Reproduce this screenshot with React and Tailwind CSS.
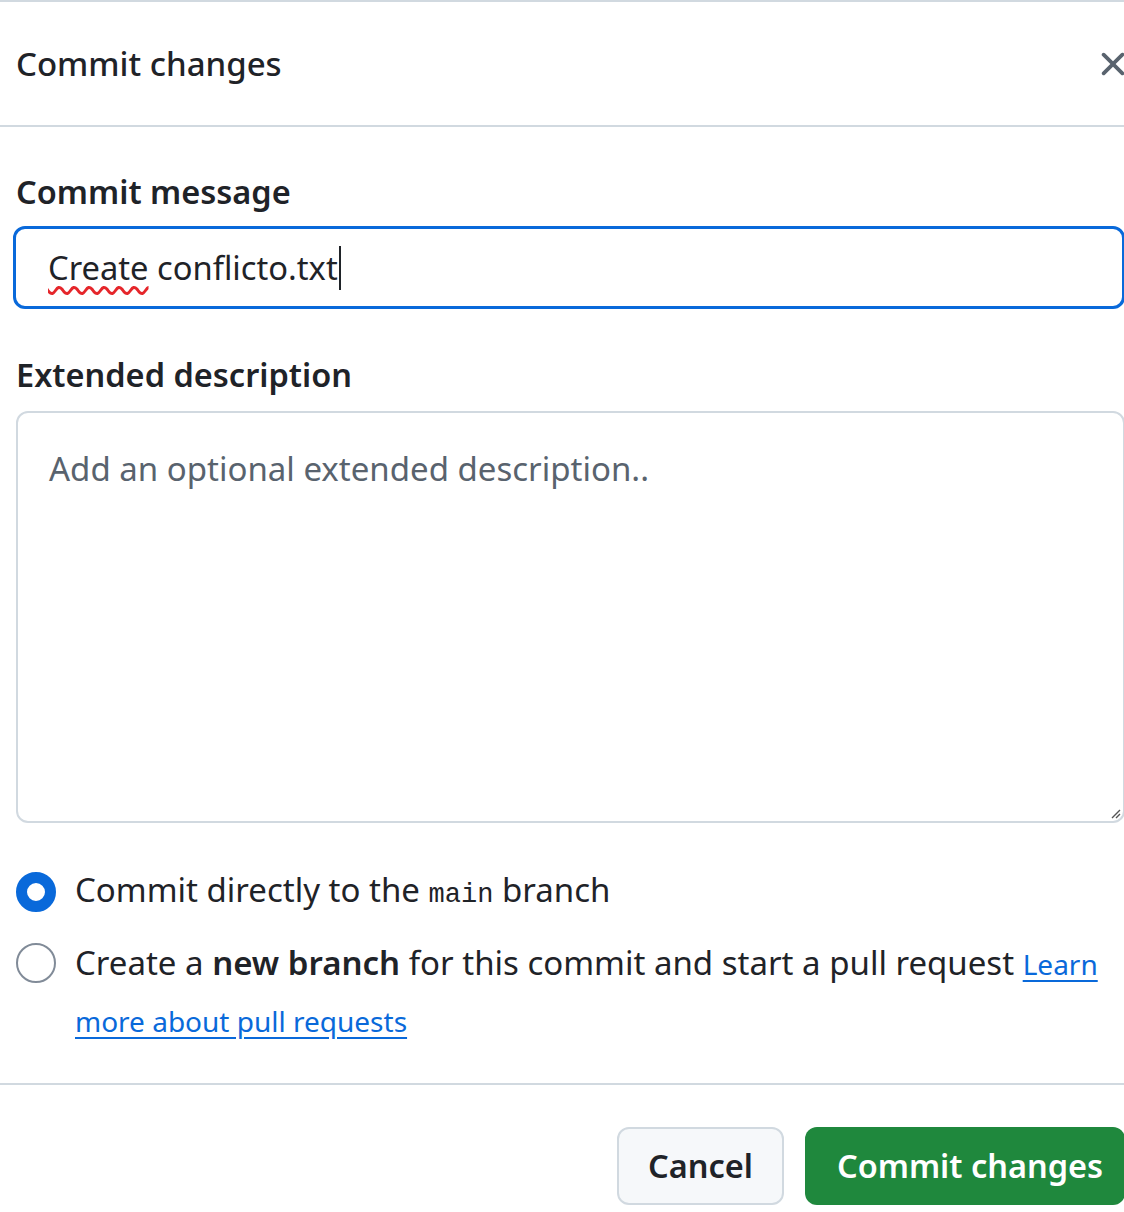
import React from 'react';

const XIcon = () => (
  <svg viewBox="0 0 16 16" width="40" height="40" fill="#59636e">
    <path d="M3.72 3.72a.75.75 0 0 1 1.06 0L8 6.94l3.22-3.22a.749.749 0 0 1 1.275.326.749.749 0 0 1-.215.734L9.06 8l3.22 3.22a.749.749 0 0 1-.326 1.275.749.749 0 0 1-.734-.215L8 9.06l-3.22 3.22a.751.751 0 0 1-1.042-.018.751.751 0 0 1-.018-1.042L6.94 8 3.72 4.78a.75.75 0 0 1 0-1.06Z" />
  </svg>
);

const App = () => {
  return (
    <div className="w-[1124px] h-[1212px] overflow-hidden bg-white font-['Noto_Sans',sans-serif] text-[#1f2328]">
      <div className="w-[1141px] border-t-2 border-[#d1d9e0]">
        {/* Header */}
        <div className="flex items-center justify-between h-[125px] pl-[16px] pr-[8px] border-b-2 border-[#d1d9e0]">
          <h2 className="text-[33px] leading-[44px] font-medium">Commit changes</h2>
          <button className="flex items-center justify-center">
            <XIcon />
          </button>
        </div>

        {/* Body */}
        <div className="pl-[16px] pr-[16px] pt-[43px] pb-[34px]">
          <label className="block text-[32.5px] leading-[44px] font-semibold mb-[12px]">
            Commit message
          </label>
          <div className="-ml-[3px] h-[83px] border-[3px] border-[#0969da] rounded-[12px] flex items-center pl-[32px] text-[32.7px]">
            <span className="underline decoration-wavy decoration-[#e5262b] decoration-[2.5px] underline-offset-[6px]">Create</span>
            <span>&nbsp;conflicto.txt</span>
            <span className="w-[2px] h-[44px] bg-[#1f2328] ml-[1px]" />
          </div>

          <label className="block text-[32.5px] leading-[44px] font-semibold mt-[44px] mb-[14px]">
            Extended description
          </label>
          <div className="relative h-[412px] border-2 border-[#d1d9e0] rounded-[12px] pt-[32px] px-[31px] text-[33px] leading-[48px] text-[#59636e]">
            Add an optional extended description..
            <svg className="absolute right-[2px] bottom-[2px]" width="12" height="12" viewBox="0 0 12 12">
              <path d="M11 3L3 11M11 7L7 11" stroke="#555" strokeWidth="1.4" />
            </svg>
          </div>

          {/* Radios */}
          <div className="mt-[41px] flex items-center h-[56px] gap-[19px]">
            <span className="w-[40px] h-[40px] rounded-full border-[11px] border-[#0969da] bg-white shrink-0" />
            <span className="text-[33px] leading-[56px]">
              Commit directly to the{' '}
              <code className="font-['Liberation_Mono',monospace] text-[27px]">main</code> branch
            </span>
          </div>
          <div className="mt-[15px] flex items-start gap-[19px]">
            <span className="mt-[8px] w-[40px] h-[40px] rounded-full border-2 border-[#818b98] bg-white shrink-0" />
            <span className="text-[33px] leading-[56px]">
              Create a <strong className="font-semibold">new branch</strong> for this commit and start a pull request{' '}
              <a className="text-[#0969da] underline underline-offset-[5px] text-[28px]">Learn more about pull requests</a>
            </span>
          </div>
        </div>

        {/* Footer */}
        <div className="border-t-2 border-[#d1d9e0] pt-[42px] pr-[16px] flex justify-end gap-[21px]">
          <button className="w-[167px] h-[78px] border-2 border-[#d1d9e0] bg-[#f6f8fa] rounded-[12px] text-[32.5px] font-semibold text-[#1f2328]">
            Cancel
          </button>
          <button className="w-[320px] h-[78px] bg-[#1f883d] rounded-[12px] text-[32.5px] font-semibold text-white pl-[10px]">
            Commit changes
          </button>
        </div>
      </div>
    </div>
  );
};

export default App;
